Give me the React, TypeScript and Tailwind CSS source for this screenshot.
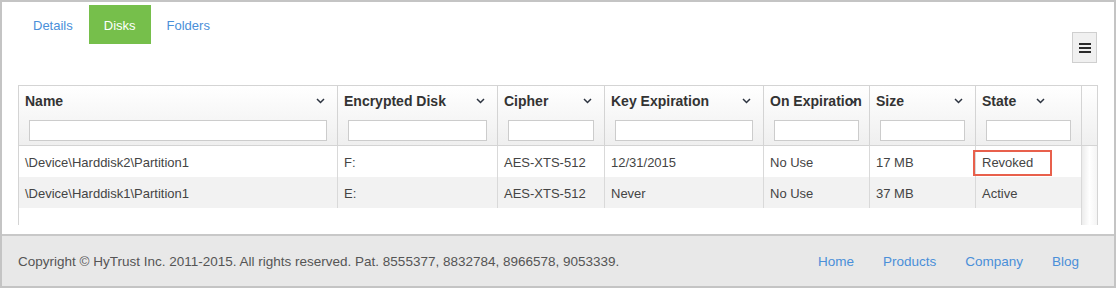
import { useState } from "react";

type Col = { label: string; chevronPos: string };

const columns: Col[] = [
  { label: "Name", chevronPos: "right-3" },
  { label: "Encrypted Disk", chevronPos: "right-3" },
  { label: "Cipher", chevronPos: "right-3" },
  { label: "Key Expiration", chevronPos: "right-3" },
  { label: "On Expiration", chevronPos: "right-[11px]" },
  { label: "Size", chevronPos: "right-3" },
  { label: "State", chevronPos: "right-[36px]" },
];

const rows = [
  ["\\Device\\Harddisk2\\Partition1", "F:", "AES-XTS-512", "12/31/2015", "No Use", "17 MB", "Revoked"],
  ["\\Device\\Harddisk1\\Partition1", "E:", "AES-XTS-512", "Never", "No Use", "37 MB", "Active"],
];

const grid = "grid grid-cols-[318px_160px_107px_159px_106px_106px_106px]";

function Chevron() {
  return (
    <svg width="9" height="6" viewBox="0 0 9 6" fill="none" className="shrink-0">
      <path d="M1 1L4.5 4.5L8 1" stroke="#2d3440" strokeWidth="1.5" />
    </svg>
  );
}

export default function App() {
  const [tab, setTab] = useState("Disks");

  return (
    <div className="w-[1116px] h-[288px] border-2 border-[#c4c4c4] bg-white flex flex-col font-['Liberation_Sans',Arial,sans-serif] text-[13px] text-[#444]">
      <div className="flex-1 px-4">
        <div className="flex items-start justify-between">
          <nav className="flex mt-[3px]">
            {["Details", "Disks", "Folders"].map((t) => (
              <button
                key={t}
                onClick={() => setTab(t)}
                className={
                  tab === t
                    ? "h-[39px] pt-[3px] px-[15px] mx-[1px] bg-[#76bf4b] text-white"
                    : "h-[39px] pt-[3px] px-[14px] mx-[1px] text-[#4a8fd9]"
                }
              >
                {t}
              </button>
            ))}
          </nav>
          <button className="mt-[30px] mr-[1px] w-[25px] h-[31px] bg-[#f0f0f0] border border-[#cfcfcf] flex flex-col items-center justify-center gap-[2px]">
            <span className="block w-[12px] h-[2px] bg-[#2a2a2a]" />
            <span className="block w-[12px] h-[2px] bg-[#2a2a2a]" />
            <span className="block w-[12px] h-[2px] bg-[#2a2a2a]" />
          </button>
        </div>

        <div className="mt-[22px] border-t border-x border-[#d4d4d4] flex flex-col h-[140px]">
          <div className="flex border-b border-[#d4d4d4] bg-gradient-to-b from-white to-[#efefef]">
            <div className={grid}>
              {columns.map((c, i) => (
                <div key={c.label} className={i === 0 ? "relative flex flex-col" : "relative flex flex-col border-l border-[#d4d4d4]"}>
                  <div className="h-[30px] flex items-center pl-[6px]">
                    <span className="font-bold text-[14px] text-[#333] whitespace-nowrap">{c.label}</span>
                  </div>
                  <span className={`absolute z-10 top-[12px] ${c.chevronPos}`}>
                    <Chevron />
                  </span>
                  <div className="px-[10px] pt-[4px] pb-[4px]">
                    <input className="block w-full h-[21px] bg-white border border-[#cccccc] outline-none" />
                  </div>
                </div>
              ))}
            </div>
            <div className="flex-1 border-l border-[#d4d4d4]" />
          </div>

          <div className="flex flex-1">
            <div className="flex flex-col">
              {rows.map((r, ri) => (
                <div key={ri} className={`${grid} h-[31px] ${ri % 2 === 1 ? "bg-[#f2f2f2]" : "bg-white"}`}>
                  {r.map((cell, ci) => (
                    <div
                      key={ci}
                      className={`${ci === 0 ? "" : "border-l border-[#d9d9d9]"} flex items-center pl-[6px] pt-[2px] whitespace-nowrap`}
                    >
                      {cell === "Revoked" ? (
                        <span className="-ml-[9px] w-[79px] h-[26px] flex items-center pl-[7px] border-2 border-[#e8604c]">
                          {cell}
                        </span>
                      ) : (
                        cell
                      )}
                    </div>
                  ))}
                </div>
              ))}
            </div>
            <div className="flex-1 border-l border-[#d9d9d9] bg-gradient-to-r from-[#ececec] via-white to-[#f4f4f4]" />
          </div>
        </div>
      </div>

      <footer className="h-[52px] shrink-0 border-t-2 border-[#c8c8c8] bg-[#e8e8e8] flex items-center justify-between pl-4 pr-[35px] pt-[3px] text-[13.5px] text-[#555]">
        <span>Copyright © HyTrust Inc. 2011-2015. All rights reserved. Pat. 8555377, 8832784, 8966578, 9053339.</span>
        <div className="flex gap-[29px] text-[#4a8fd9]">
          <a href="#">Home</a>
          <a href="#">Products</a>
          <a href="#">Company</a>
          <a href="#">Blog</a>
        </div>
      </footer>
    </div>
  );
}
